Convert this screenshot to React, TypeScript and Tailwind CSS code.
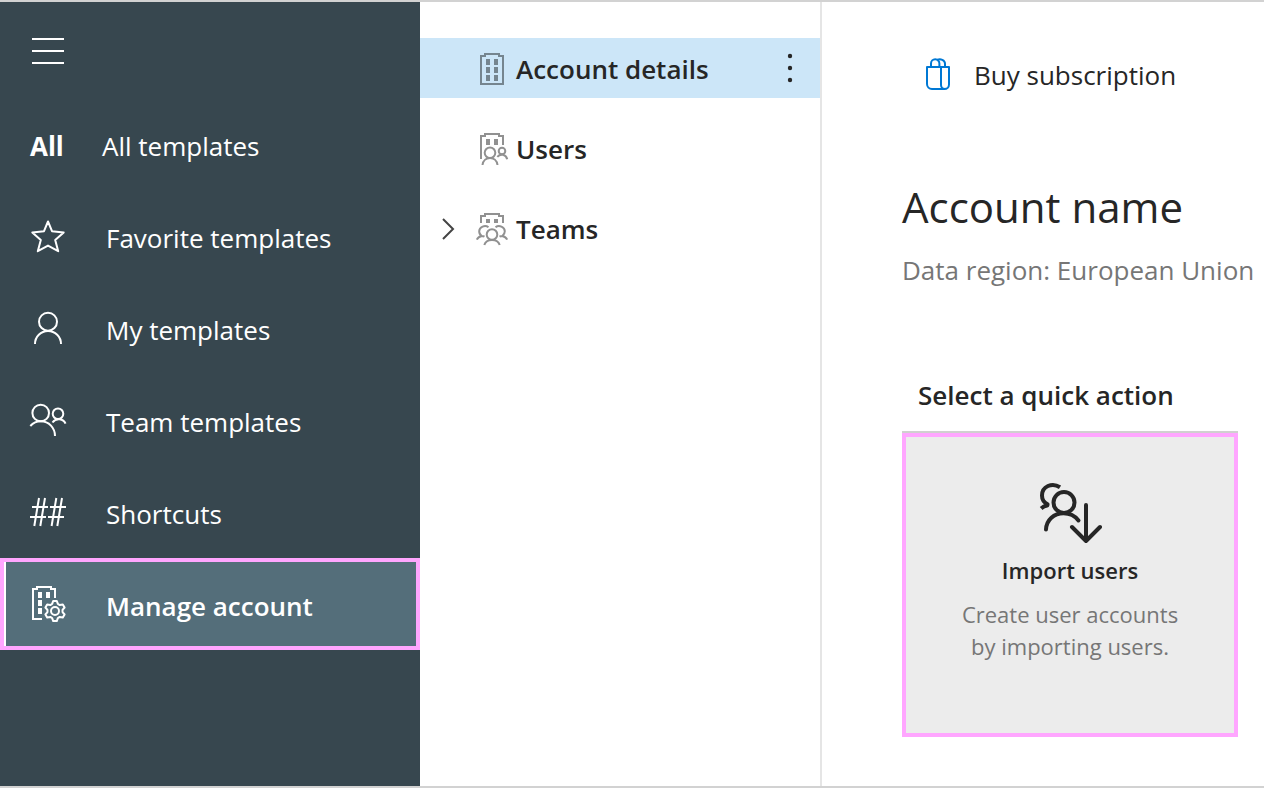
import type { ReactNode } from "react";

const gearPoints = [0, 60, 120, 180, 240, 300]
  .flatMap((tooth) =>
    [
      [-22, 7.6],
      [-10, 10.2],
      [10, 10.2],
      [22, 7.6],
    ].map(([offset, radius]) => {
      const angle = ((tooth + offset - 90) * Math.PI) / 180;
      return `${(31 + radius * Math.cos(angle)).toFixed(2)},${(31 + radius * Math.sin(angle)).toFixed(2)}`;
    }),
  )
  .join(" ");

function NavIcon({ children }: { children: ReactNode }) {
  return (
    <svg viewBox="0 0 48 48" className="size-12" fill="none" stroke="currentColor" strokeWidth="2" aria-hidden="true">
      {children}
    </svg>
  );
}

function StarIcon() {
  return (
    <NavIcon>
      <path
        strokeLinejoin="round"
        d="M24 9.5 28 19.2 39.7 20.4 31.2 28 34.2 39.2 24 33.6 13.8 39.2 16.8 28 8.3 20.4 20 19.2Z"
      />
    </NavIcon>
  );
}

function PersonIcon() {
  return (
    <NavIcon>
      <circle cx="24" cy="17.7" r="9" />
      <path d="M11 40a13 13 0 0 1 26 0" />
    </NavIcon>
  );
}

function PeopleIcon() {
  return (
    <NavIcon>
      <circle cx="16.7" cy="17" r="8.3" />
      <path d="M6.3 30c3-3.200 6.400-4.700 10.400-4.700C25 25.300 31 32 31 40" />
      <circle cx="34" cy="17.700" r="5.300" />
      <path d="M28.500 26.500c3.500-5 11-4.200 13 1.200" />
    </NavIcon>
  );
}

function HashIcon() {
  return (
    <NavIcon>
      <path d="M8 19H24M26 19H42M6 29H22M24 29H40M15 10 10.300 38M21 10 16.300 38M32.300 10 27.600 38M38 10 33.300 38" />
    </NavIcon>
  );
}

function ManageIcon() {
  return (
    <NavIcon>
      <path d="M18 39H9V9H13V7H27V9H31V18" />
      <path
        fill="currentColor"
        stroke="none"
        d="M14 12h4v6h-4zM22 12h4v6h-4zM14 20h4v6h-4zM14 28h4v6h-4z"
      />
      <polygon points={gearPoints} strokeLinejoin="round" />
      <circle cx="31" cy="31" r="4" />
    </NavIcon>
  );
}

function TreeIcon({ children }: { children: ReactNode }) {
  return (
    <svg viewBox="0 0 40 40" className="size-10" fill="none" stroke="currentColor" strokeWidth="2" aria-hidden="true">
      {children}
    </svg>
  );
}

function AccountIcon() {
  return (
    <TreeIcon>
      <path d="M9 36V8H13V6H27V8H31V36Z" />
      <path
        fill="currentColor"
        stroke="none"
        d="M14 11h4v6h-4zM22 11h4v6h-4zM14 19h4v6h-4zM22 19h4v6h-4zM14 27h4v6h-4zM22 27h4v6h-4z"
      />
    </TreeIcon>
  );
}

function UsersIcon() {
  return (
    <TreeIcon>
      <path d="M9 31V8H13V6H27V8H31V17" />
      <path fill="currentColor" stroke="none" d="M14 11h4v6h-4zM22 11h4v6h-4z" />
      <circle cx="18" cy="24.700" r="5.300" />
      <path d="M10.500 37c1-9.300 14-9.300 15 0" />
      <circle cx="30" cy="23" r="3.300" />
      <path d="M25.300 28.800c3.200-3.600 8.700-2.600 9.900 2.400" />
    </TreeIcon>
  );
}

function TeamsIcon() {
  return (
    <TreeIcon>
      <path d="M9 15V8H13V6H27V8H31V15" />
      <path fill="currentColor" stroke="none" d="M14 11h4v4h-4zM22 11h4v4h-4z" />
      <circle cx="20" cy="26.500" r="5.300" />
      <path d="M12.300 37c2-6.600 13.400-6.600 15.400 0" />
      <path d="M16.500 19.300C13 16.700 7.300 18.800 7.200 23.300c0 2 1 3.700 2.500 4.700C7.500 28.500 5.700 29.700 4.800 31.700M9.700 28c1.300 0 2 .2 2.800.7" />
      <path d="M23.500 19.300C27 16.700 32.700 18.800 32.800 23.300c0 2-1 3.700-2.500 4.700C32.500 28.500 34.300 29.700 35.200 31.700M30.300 28c-1.300 0-2 .2-2.800.7" />
    </TreeIcon>
  );
}

function BagIcon() {
  return (
    <svg viewBox="0 0 24 32" className="h-8 w-6" fill="none" stroke="currentColor" strokeWidth="2" aria-hidden="true">
      <path strokeLinejoin="round" d="M1 9H23V26.500A4.500 4.500 0 0 1 18.500 31H6A5 5 0 0 1 1 26Z" />
      <path d="M15 9V27A4 4 0 0 0 19 31" />
      <path d="M5 9V5.500a4.200 4.200 0 0 1 8.400 0V9M11 2C14.500 .3 19 2 19 5.700V9" />
    </svg>
  );
}

function ImportIcon() {
  return (
    <svg
      viewBox="0 0 64 64"
      className="size-16"
      fill="none"
      stroke="currentColor"
      strokeWidth="4"
      strokeLinecap="round"
      strokeLinejoin="round"
      aria-hidden="true"
    >
      <circle cx="26" cy="22.500" r="10.500" />
      <path d="M8 49.500C8.500 40 16 33.300 25.500 33.300c6.500 0 11.500 2.700 15 7.200" />
      <path strokeLinecap="butt" d="M22 7.200C14 2 4 6.500 4 15.500c0 3.800 2 7 5.600 8.800L9.300 25.500C7 25.700 5 26.700 3.200 28.500" />
      <path d="M48 25V61M34 47 48 61 62 47" />
    </svg>
  );
}

const navItems = [
  { label: "Favorite templates", icon: <StarIcon /> },
  { label: "My templates", icon: <PersonIcon /> },
  { label: "Team templates", icon: <PeopleIcon /> },
  { label: "Shortcuts", icon: <HashIcon /> },
];

export default function App() {
  return (
    <div className="flex min-h-screen overflow-x-hidden border-y-2 border-[#d2d2d2] bg-white font-['Open_Sans',sans-serif] text-[26px] leading-9 text-[#262626]">
      <nav aria-label="Main" className="w-[420px] shrink-0 bg-[#37474f] text-white">
        <div className="flex h-24 items-center px-6 pt-0.5">
          <button type="button" aria-label="Toggle menu">
            <NavIcon>
              <path d="M8 12H40M8 24H40M8 36H40" />
            </NavIcon>
          </button>
        </div>
        <a href="#all" className="flex h-[92px] items-center pt-1 pl-[30px]">
          <span className="w-[72px] font-bold">All</span>
          <span>All templates</span>
        </a>
        {navItems.map((item) => (
          <a key={item.label} href="#templates" className="flex h-[92px] items-center gap-[34px] px-6">
            {item.icon}
            <span className="pt-1">{item.label}</span>
          </a>
        ))}
        <a
          href="#manage"
          aria-current="page"
          className="flex h-[92px] border-4 border-[#ffa6ff] bg-[#546e7a] font-semibold"
        >
          <span className="flex flex-1 items-center gap-[34px] border-l-2 border-white pl-[18px]">
            <ManageIcon />
            <span className="pt-1">Manage account</span>
          </span>
        </a>
      </nav>

      <section aria-label="Account" className="flex w-[402px] shrink-0 flex-col gap-5 border-r-2 border-[#e5e5e5] pt-9 font-semibold">
        <div className="flex h-[60px] items-center bg-[#cce6f8] pr-4 pl-[52px]">
          <a href="#details" className="flex flex-1 items-center gap-1">
            <span className="text-[#75858f]">
              <AccountIcon />
            </span>
            <span className="pt-0.5">Account details</span>
          </a>
          <button type="button" aria-label="More options">
            <svg viewBox="0 0 28 40" className="h-10 w-7" fill="currentColor" aria-hidden="true">
              <circle cx="14" cy="8" r="2.200" />
              <circle cx="14" cy="20" r="2.200" />
              <circle cx="14" cy="32" r="2.200" />
            </svg>
          </button>
        </div>
        <a href="#users" className="flex h-[60px] items-center gap-1 pl-[52px]">
          <span className="text-[#919191]">
            <UsersIcon />
          </span>
          <span className="pt-0.5">Users</span>
        </a>
        <div className="flex h-[60px] items-center pl-4">
          <button type="button" aria-label="Expand teams" className="w-9">
            <svg viewBox="0 0 24 24" className="size-6" fill="none" stroke="#444" strokeWidth="2" aria-hidden="true">
              <path d="M7 3 17 13 7 23" />
            </svg>
          </button>
          <a href="#teams" className="flex items-center gap-1">
            <span className="text-[#919191]">
              <TeamsIcon />
            </span>
            <span className="pt-0.5">Teams</span>
          </a>
        </div>
      </section>

      <main className="min-w-0 flex-1 pt-[53px] pl-20">
        <button type="button" className="flex items-center gap-6 pl-6">
          <span className="text-[#0078d4]">
            <BagIcon />
          </span>
          <span className="pt-0.5">Buy subscription</span>
        </button>
        <h1 className="mt-[84px] text-[42px] leading-[60px]">Account name</h1>
        <p className="mt-[15px] whitespace-nowrap text-[#767676]">Data region: European Union</p>
        <h2 className="mt-[89px] pl-4 font-semibold">Select a quick action</h2>
        <div className="mt-[18px] w-[336px] border-t-2 border-[#d0d0d0]">
          <button
            type="button"
            className="flex h-[304px] w-full flex-col items-center border-4 border-[#ffa6ff] bg-[#ececec] pt-[43px]"
          >
            <ImportIcon />
            <span className="mt-2.5 text-[22px] leading-8 font-semibold">Import users</span>
            <span className="mt-3 w-[236px] text-[22px] leading-8 text-[#767676]">
              Create user accounts by importing users.
            </span>
          </button>
        </div>
      </main>
    </div>
  );
}
